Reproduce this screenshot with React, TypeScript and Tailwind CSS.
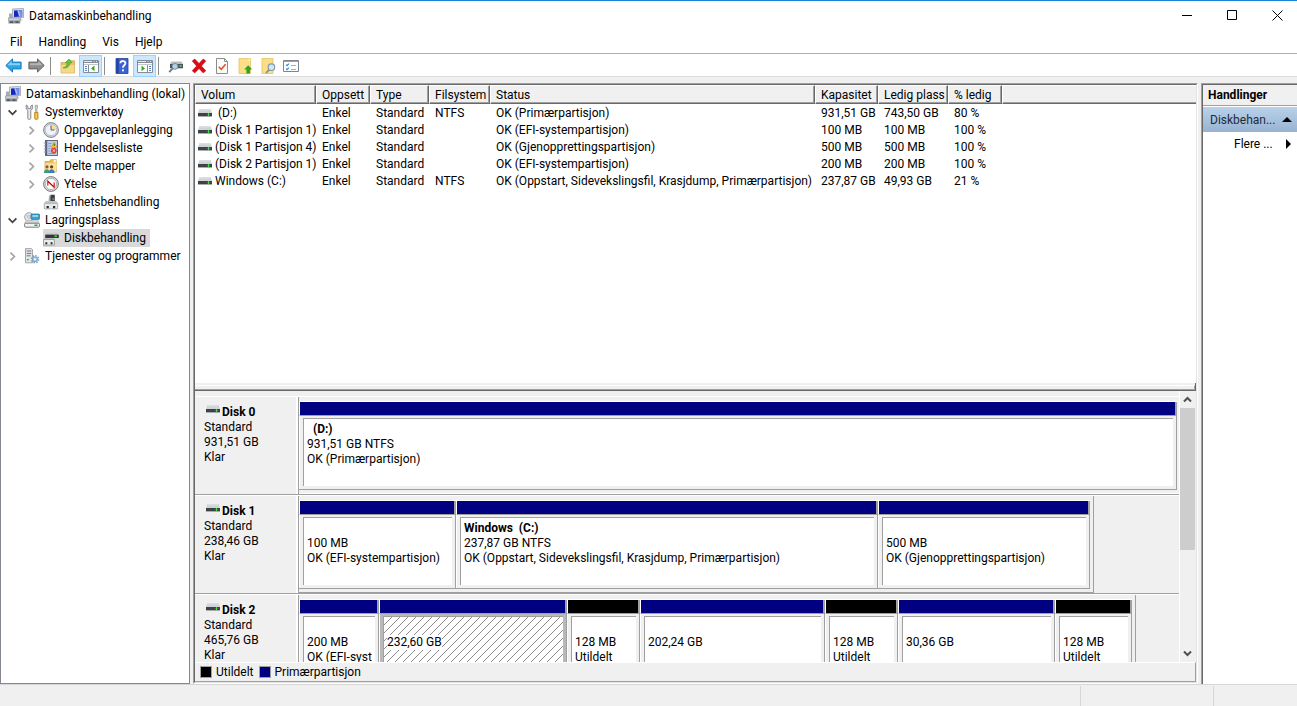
import { useState, ReactNode } from 'react';
import clsx from 'clsx';

type Volume = {
  name: string;
  fs: string;
  status: string;
  capacity: string;
  free: string;
  percent: string;
};

type Partition = {
  name?: string;
  size: string;
  status?: string;
  weight: number;
  unallocated?: boolean;
  selected?: boolean;
};

type Disk = {
  name: string;
  size: string;
  share: number;
  framed: boolean;
  partitions: Partition[];
};

const volumes: Volume[] = [
  { name: '\u00a0(D:)', fs: 'NTFS', status: 'OK (Primærpartisjon)', capacity: '931,51 GB', free: '743,50 GB', percent: '80 %' },
  { name: '(Disk 1 Partisjon 1)', fs: '', status: 'OK (EFI-systempartisjon)', capacity: '100 MB', free: '100 MB', percent: '100 %' },
  { name: '(Disk 1 Partisjon 4)', fs: '', status: 'OK (Gjenopprettingspartisjon)', capacity: '500 MB', free: '500 MB', percent: '100 %' },
  { name: '(Disk 2 Partisjon 1)', fs: '', status: 'OK (EFI-systempartisjon)', capacity: '200 MB', free: '200 MB', percent: '100 %' },
  { name: 'Windows (C:)', fs: 'NTFS', status: 'OK (Oppstart, Sidevekslingsfil, Krasjdump, Primærpartisjon)', capacity: '237,87 GB', free: '49,93 GB', percent: '21 %' },
];

const disks: Disk[] = [
  {
    name: 'Disk 0',
    size: '931,51 GB',
    share: 100,
    framed: false,
    partitions: [{ name: '\u00a0\u00a0(D:)', size: '931,51 GB NTFS', status: 'OK (Primærpartisjon)', weight: 878 }],
  },
  {
    name: 'Disk 1',
    size: '238,46 GB',
    share: 90.34,
    framed: true,
    partitions: [
      { size: '100 MB', status: 'OK (EFI-systempartisjon)', weight: 157 },
      { name: 'Windows\u00a0\u00a0(C:)', size: '237,87 GB NTFS', status: 'OK (Oppstart, Sidevekslingsfil, Krasjdump, Primærpartisjon)', weight: 422 },
      { size: '500 MB', status: 'OK (Gjenopprettingspartisjon)', weight: 212 },
    ],
  },
  {
    name: 'Disk 2',
    size: '465,76 GB',
    share: 95.11,
    framed: true,
    partitions: [
      { size: '200 MB', status: 'OK (EFI-systempartisjon)', weight: 80 },
      { size: '232,60 GB', weight: 188, selected: true },
      { size: '128 MB', status: 'Utildelt', weight: 73, unallocated: true },
      { size: '202,24 GB', weight: 185 },
      { size: '128 MB', status: 'Utildelt', weight: 73, unallocated: true },
      { size: '30,36 GB', weight: 157 },
      { size: '128 MB', status: 'Utildelt', weight: 77, unallocated: true },
    ],
  },
];

const columns = [
  { label: 'Volum', width: 'w-[121px]' },
  { label: 'Oppsett', width: 'w-[54px]' },
  { label: 'Type', width: 'w-[59px]' },
  { label: 'Filsystem', width: 'w-[61px]' },
  { label: 'Status', width: 'w-[325px]' },
  { label: 'Kapasitet', width: 'w-[63px]' },
  { label: 'Ledig plass', width: 'w-[70px]' },
  { label: '% ledig', width: 'w-[54px]' },
];

/* ---------- icons ---------- */

function Svg({ children, size = 16 }: { children: ReactNode; size?: number }) {
  return (
    <svg width={size} height={size} viewBox="0 0 16 16" className="shrink-0" aria-hidden="true">
      {children}
    </svg>
  );
}

function ComputerIcon() {
  return (
    <Svg>
      <path d="M4.5 1 15.5.5v9l-11 .7z" fill="#dcdfe3" stroke="#9a9fa6" strokeWidth=".8" />
      <path d="M6 2.4 14.2 2v6.4L6 9z" fill="#1428c0" />
      <path d="M10 2.2 14.2 2v6.4l-2.4.2z" fill="#6f8ff0" />
      <path d="m9.2 2.2 1.6 0 1.8 6.3-1.6.1z" fill="#c9d6ff" opacity=".8" />
      <path d="M9.5 10h3l2 2.6h-6z" fill="#c6cad0" />
      <path d="M1 5.5h3.2v4.8H1z" fill="#a7acb3" />
      <path d="M.5 9.8h11.8v3H.5z" fill="#c9cdd2" stroke="#868b92" strokeWidth=".6" />
      <path d="M.5 12.8h11.8v2.7H.5z" fill="#8b9097" />
      <path d="M2 13.5h3v1.2H2zM7.5 13.5h3v1.2h-3z" fill="#3f444a" />
    </Svg>
  );
}

function DriveIcon() {
  return (
    <svg width="14" height="8" viewBox="0 0 14 8" className="shrink-0" aria-hidden="true">
      <path d="M1.5 0h11L14 4H0z" fill="#cfd2d6" />
      <path d="M2 0h10l.6 1.6H1.4z" fill="#dcdfe2" />
      <rect y="4" width="14" height="3" fill="#3f4346" />
      <rect y="7" width="14" height="1" fill="#a9acaf" />
      <rect x="9" y="5" width="3" height="1" fill="#1f9a2c" />
      <rect x="10" y="4" width="1" height="3" fill="#3fdc4a" />
    </svg>
  );
}

function ToolsIcon() {
  return (
    <Svg>
      <path d="M2.2 1v3.8l1.6 1.6v8c0 1.4 3 1.4 3 0v-8l1.6-1.6V1L6.8 2v2.6H3.8V2z" fill="#e6e8ea" stroke="#7c8187" strokeWidth=".9" />
      <path d="M11.2 1.3h2.2v2.8l-.5 1v3.4h-1.2V5.1l-.5-1z" fill="#d8dade" stroke="#85898f" strokeWidth=".7" />
      <path d="M10.6 8.5H14v6c0 1.3-3.4 1.3-3.4 0z" fill="#f2b21c" stroke="#b57a08" strokeWidth=".7" />
      <path d="M12.3 9.5v5" stroke="#fbdc86" strokeWidth=".8" />
    </Svg>
  );
}

function ClockIcon() {
  return (
    <Svg>
      <circle cx="8" cy="8" r="7.4" fill="#d5d7da" stroke="#808388" strokeWidth="1" />
      <circle cx="8" cy="8" r="5.7" fill="#eef3f9" stroke="#a4a8ad" strokeWidth=".6" />
      <path d="M8 8V2.6A5.4 5.4 0 0 1 13.4 8z" fill="#f6d99c" />
      <path d="M8 3.4V8h3.4" fill="none" stroke="#5c6066" strokeWidth="1" />
    </Svg>
  );
}

function EventLogIcon() {
  return (
    <Svg>
      <rect x="2.5" y=".5" width="12" height="15" fill="#bdcfe9" stroke="#566079" strokeWidth=".9" />
      <rect x="2" y="1" width="2.2" height="14" fill="#5a6580" />
      <path d="M.8 3h2.4M.8 6h2.4M.8 9h2.4M.8 12h2.4" stroke="#8e96a8" strokeWidth="1" />
      <path d="M5.4 3.5h3M5.4 6h2.4M5.4 8.5h2M5.4 11h2M5.4 13.5h7" stroke="#7f94bb" strokeWidth=".9" />
      <path d="m11.2 2.2 2.8 5H8.4z" fill="#ffd93b" stroke="#b98c00" strokeWidth=".6" />
      <path d="M11.2 3.8v2.2" stroke="#333" strokeWidth=".9" />
      <circle cx="10.8" cy="10.6" r="2.9" fill="#d9453b" />
      <path d="m9.7 9.5 2.2 2.2m0-2.2-2.2 2.2" stroke="#fff" strokeWidth=".8" />
    </Svg>
  );
}

function SharedFolderIcon() {
  return (
    <Svg>
      <path d="M2 3.5h4.5l1-1.7h6V14H2z" fill="#e9bf5c" stroke="#c99a35" strokeWidth=".7" />
      <path d="M2.3 5.3H14l-.5 8.5H2.3z" fill="#fae09a" />
      <path d="M10.5 2h3v2.5h-3z" fill="#fff3cf" />
      <circle cx="4" cy="8.8" r="1.6" fill="#8b5a35" />
      <circle cx="8.6" cy="8.8" r="1.6" fill="#5b4031" />
      <path d="M.9 15c0-5 5.8-5 5.8 0z" fill="#3f9d7a" />
      <path d="M5.8 15c0-5 5.8-5 5.8 0z" fill="#3f78c4" />
    </Svg>
  );
}

function PerformanceIcon() {
  return (
    <Svg>
      <circle cx="8" cy="8" r="7.4" fill="#dcdee0" stroke="#77797d" strokeWidth="1" />
      <circle cx="8" cy="8" r="5.6" fill="#fff" stroke="#96999c" strokeWidth=".7" />
      <path d="M4.8 9.5V5.2l6.4 6V6.5" fill="none" stroke="#cf2a20" strokeWidth="1.3" />
      <path d="m5 5.2 6 5.8" stroke="#8d1610" strokeWidth="1" />
    </Svg>
  );
}

function DeviceIcon() {
  return (
    <Svg>
      <path d="M7.5.8h4.3V9H6z" fill="#3b3e42" />
      <path d="M6 2 7.5.8V8H5.5z" fill="#a7abb0" />
      <rect x="9.6" y="4.2" width="1.2" height="1.6" fill="#4be05b" />
      <path d="M2.5 7h11l1.3 2.4H1.2z" fill="#c4c7ca" />
      <path d="M1.3 9.3h13.4v5.6H1.3z" fill="#e6e8ea" stroke="#9da1a5" strokeWidth=".8" />
      <path d="M3.6 12h2.2v2.2H3.6zM10 12h2.2v2.2H10z" fill="#26292c" />
    </Svg>
  );
}

function StorageIcon() {
  return (
    <Svg>
      <circle cx="5" cy="5" r="4.4" fill="#e3e6e9" stroke="#8f9499" strokeWidth=".8" />
      <path d="M5 5 1.6 2.4M5 5l3.2-2.6" stroke="#bcc3ca" strokeWidth="1" />
      <circle cx="5" cy="5" r="1.3" fill="#fff" stroke="#8f9499" strokeWidth=".6" />
      <rect x="7" y="2" width="8.6" height="5.4" rx=".8" fill="#3b9fd0" stroke="#2a6f94" strokeWidth=".7" />
      <path d="M8.4 3.3h5.6v1.4H8.4z" fill="#bfe5f6" />
      <path d="M2 8.4h12l1.2 3H.8z" fill="#d6d9dc" stroke="#a3a7ab" strokeWidth=".5" />
      <rect x=".6" y="11.2" width="14.8" height="4" rx="1" fill="#f0f1f2" stroke="#6d7175" strokeWidth=".9" />
      <rect x="10.5" y="12.5" width="3" height="1.5" fill="#23a93a" />
    </Svg>
  );
}

function DiskMgmtIcon() {
  return (
    <Svg>
      <path d="M3.5 2.5h10.8l1.4 2.3H2.5z" fill="#cbced1" />
      <rect x="2.2" y="4.6" width="13.6" height="3.4" fill="#35383b" />
      <rect x="11.5" y="5.4" width="2.4" height="1.6" fill="#3be04b" />
      <path d="M1.5 8h9l.8 1.6H.7z" fill="#bfc2c5" />
      <path d="M.6 9.5h10.8v5.6H.6z" fill="#e9ebec" stroke="#8f9397" strokeWidth=".8" />
      <path d="M2.4 12.2h1.9v2H2.4zM7.6 12.2h1.9v2H7.6z" fill="#26292c" />
    </Svg>
  );
}

function ServicesIcon() {
  return (
    <Svg>
      <path d="M1.5.6h6l1 1v13.2h-7z" fill="#e4e7ea" stroke="#8f9499" strokeWidth=".8" />
      <path d="M2.6 3h4.8M2.6 5.4h4.8M2.6 7.8h4" stroke="#71777d" strokeWidth="1" />
      <rect x="2.8" y="11" width="2" height="1.4" fill="#34b34a" />
      <circle cx="11" cy="11.2" r="3.5" fill="none" stroke="#7ba3c6" strokeWidth="1.6" strokeDasharray="1.6 1.1" />
      <circle cx="11" cy="11.2" r="2.5" fill="#a9cbe6" stroke="#6b95bb" strokeWidth=".8" />
      <circle cx="11" cy="11.2" r="1" fill="#fff" />
    </Svg>
  );
}

function ArrowIcon({ forward = false }: { forward?: boolean }) {
  return (
    <svg width="17" height="15" viewBox="0 0 17 15" className={clsx('shrink-0', forward && '-scale-x-100')} aria-hidden="true">
      <path
        d="M.8 7.5 7.5.9v3.2h8.6v6.8H7.5v3.2z"
        fill={forward ? '#8d8d8d' : '#2fa5e6'}
        stroke={forward ? '#646464' : '#1c78bd'}
        strokeWidth="1"
        strokeLinejoin="round"
      />
      <path d="M2.4 7.2 6.6 3v2.2h8.4v2z" fill={forward ? '#b3b3b3' : '#83d2f8'} />
    </svg>
  );
}

function FolderUpIcon() {
  return (
    <Svg>
      <path d="M1 4.5h5l1.2-1.8h7.3V15H1z" fill="#e5c467" stroke="#c9a24a" strokeWidth=".7" />
      <path d="M1.3 7h13v7.7h-13z" fill="#f3d988" />
      <path d="M3 9.8C6.2 9 7.2 7.4 7.3 4.8H5.4L9 1l2.9 3.8h-2c-.2 3.4-3 6-6.9 5z" fill="#5cc83a" stroke="#3b9a26" strokeWidth=".6" />
    </Svg>
  );
}

function PaneIcon({ right = false }: { right?: boolean }) {
  return (
    <Svg>
      <path d="M.5 2.5h15v12H.5z" fill="#fff" stroke="#868c96" strokeWidth="1" />
      <path d="M1 3h14v2H1z" fill="#868c96" />
      <path d="M1 3.5h8M10.5 3.5h1M13 3.5h1" stroke="#e6e9ed" strokeWidth="1" />
      <path d="M1 6.5h14" stroke="#c3c8cf" strokeWidth="1" />
      <path d={right ? 'M10.5 7v7' : 'M5.5 7v7'} stroke="#868c96" strokeWidth="1" />
      <path d={right ? 'M12 8.5h2M12 10.5h2M12 12.5h2' : 'M2 8.5h2M2 10.5h2M2 12.5h2'} stroke="#4d7fc4" strokeWidth="1" />
      <path d={right ? 'M4.5 7.6v5.6L8 10.4z' : 'M11.5 7.6v5.6L8 10.4z'} fill="#3fa526" />
    </Svg>
  );
}

function HelpIcon() {
  return (
    <Svg>
      <path d="M2 .5h12v15H2z" fill="#3c63d2" stroke="#23409c" strokeWidth=".8" />
      <path d="M2.4.9h2.2v14.2H2.4z" fill="#21409f" />
      <path d="M6.4 5.2c0-3 5-2.8 5 0 0 2-2.5 2.2-2.5 4.6" fill="none" stroke="#fff" strokeWidth="1.8" />
      <rect x="8" y="11.4" width="1.9" height="1.9" fill="#fff" />
    </Svg>
  );
}

function DriveSearchIcon() {
  return (
    <Svg>
      <path d="M3.5 3.5h10L15 6H2z" fill="#b9bdc1" />
      <path d="M2 6h13v4H2z" fill="#4e5257" />
      <path d="M2 10h13v1H2z" fill="#c9cccf" />
      <rect x="11.5" y="7" width="2.2" height="1.8" fill="#42d552" />
      <circle cx="7" cy="8.4" r="2.9" fill="#b3d3ea" stroke="#7b8c9a" strokeWidth="1" />
      <path d="M4.8 10.4 1.2 14" stroke="#73797f" strokeWidth="1.8" />
    </Svg>
  );
}

function DeleteIcon() {
  return (
    <Svg>
      <path d="M1.2 3 3.8 1 8 5.4 12.2 1l2.6 2L10.4 8l4.4 4.8-2.6 2.1L8 10.6l-4.2 4.3-2.6-2.1L5.6 8z" fill="#dc0812" stroke="#b0050c" strokeWidth=".5" />
    </Svg>
  );
}

function CheckPageIcon() {
  return (
    <Svg>
      <path d="M2.5.5h8l3 3v12h-11z" fill="#fafafa" stroke="#8c8c8c" strokeWidth="1" />
      <path d="M10.5.5v3h3" fill="none" stroke="#8c8c8c" strokeWidth="1" />
      <path d="m4.8 8.8 2.4 2.5 4.4-5" fill="none" stroke="#e8501e" strokeWidth="1.6" />
    </Svg>
  );
}

function NoteUpIcon() {
  return (
    <Svg>
      <path d="M2 .5h11.5v15H2z" fill="#fadf88" stroke="#e6c360" strokeWidth=".8" />
      <path d="M10.5.8h2.6v3.4z" fill="#fdf0bd" />
      <path d="m11.2 7.2 4 4.2H13v4H9.4v-4H7.2z" fill="#2ea51f" />
    </Svg>
  );
}

function NoteSearchIcon() {
  return (
    <Svg>
      <path d="M2 .5h11v15H2z" fill="#fadf88" stroke="#e6c360" strokeWidth=".8" />
      <circle cx="11.4" cy="9.2" r="3.3" fill="#cfe6f5" stroke="#7c97ab" strokeWidth="1.1" />
      <path d="m9 11.8-3 3.2" stroke="#8b8f94" strokeWidth="1.8" />
    </Svg>
  );
}

function ChecklistIcon() {
  return (
    <Svg>
      <path d="M.5 2.5h15v11H.5z" fill="#fff" stroke="#80858d" strokeWidth="1" />
      <path d="M1 3.5h14" stroke="#9aa0a9" strokeWidth="1" />
      <path d="m3 6.6 1.1 1.1 1.8-2M3 10.6l1.1 1.1 1.8-2" fill="none" stroke="#2f86d6" strokeWidth="1.1" />
      <path d="M8 7.5h5M8 11.5h5" stroke="#a5abb3" strokeWidth="1" />
    </Svg>
  );
}

function Chevron({ open }: { open: boolean }) {
  return (
    <svg width="9" height="9" viewBox="0 0 9 9" aria-hidden="true">
      <path d={open ? 'M.6 2.4 4.5 6.3 8.4 2.4' : 'M2.5.6 6.4 4.5 2.5 8.4'} fill="none" stroke={open ? '#404040' : '#a6a6a6'} strokeWidth="1.7" />
    </svg>
  );
}

/* ---------- window chrome ---------- */

function TitleBar() {
  return (
    <header className="flex h-[30px] items-center pl-2">
      <ComputerIcon />
      <h1 className="ml-[5px] flex-1">Datamaskinbehandling</h1>
      <div className="flex gap-1.5 self-start">
        <button type="button" aria-label="Minimer" className="flex h-7 w-[39px] items-center justify-center">
          <svg width="11" height="11"><path d="M0 5.5h10" stroke="#000" /></svg>
        </button>
        <button type="button" aria-label="Maksimer" className="flex h-7 w-[39px] items-center justify-center">
          <svg width="11" height="11"><path d="M.5.5h9v9h-9z" fill="none" stroke="#000" /></svg>
        </button>
        <button type="button" aria-label="Lukk" className="flex h-7 w-[39px] items-center justify-center">
          <svg width="11" height="11"><path d="m.5.5 10 10m0-10-10 10" stroke="#000" /></svg>
        </button>
      </div>
    </header>
  );
}

function ToolButton({ label, active = false, children }: { label: string; active?: boolean; children: ReactNode }) {
  return (
    <button
      type="button"
      aria-label={label}
      className={clsx(
        'flex h-[22px] w-[23px] items-center justify-center border',
        active ? 'border-[#99d1ff] bg-[#cce8ff]' : 'border-transparent',
      )}
    >
      {children}
    </button>
  );
}

function Separator() {
  return (
    <div className="w-2 pl-0.5">
      <div className="h-[18px] w-px bg-[#8c8c8c]" />
    </div>
  );
}

function Toolbar() {
  return (
    <div className="flex h-[23px] items-center border-b border-[#dcdcdc] pt-px pl-0.5">
      <ToolButton label="Tilbake"><ArrowIcon /></ToolButton>
      <ToolButton label="Frem"><ArrowIcon forward /></ToolButton>
      <Separator />
      <ToolButton label="Opp ett nivå"><FolderUpIcon /></ToolButton>
      <ToolButton label="Vis konsolltre" active><PaneIcon /></ToolButton>
      <Separator />
      <ToolButton label="Hjelp"><HelpIcon /></ToolButton>
      <ToolButton label="Vis handlingsrute" active><PaneIcon right /></ToolButton>
      <Separator />
      <ToolButton label="Søk på nytt"><DriveSearchIcon /></ToolButton>
      <ToolButton label="Slett"><DeleteIcon /></ToolButton>
      <ToolButton label="Egenskaper"><CheckPageIcon /></ToolButton>
      <ToolButton label="Åpne"><NoteUpIcon /></ToolButton>
      <ToolButton label="Utforsk"><NoteSearchIcon /></ToolButton>
      <ToolButton label="Innstillinger"><ChecklistIcon /></ToolButton>
    </div>
  );
}

/* ---------- tree ---------- */

type NodeProps = {
  icon: ReactNode;
  label: string;
  level: 1 | 2;
  state?: 'open' | 'closed';
  selected?: boolean;
  onClick?: () => void;
};

function TreeNode({ icon, label, level, state, selected = false, onClick }: NodeProps) {
  return (
    <button type="button" onClick={onClick} className={clsx('flex h-[18px] items-center', level === 1 ? 'pl-[7px]' : 'pl-[26px]')}>
      <span className="flex w-4">{state && <Chevron open={state === 'open'} />}</span>
      <span className={clsx('flex h-[18px] items-center gap-[5px] pr-1', selected && 'bg-[#d9d9d9]')}>
        {icon}
        {label}
      </span>
    </button>
  );
}

function Tree() {
  const [tools, setTools] = useState(true);
  const [storage, setStorage] = useState(true);

  return (
    <nav className="w-[190px] shrink-0 overflow-hidden border border-[#828790] bg-white pt-px whitespace-nowrap">
      <button type="button" className="flex h-[18px] items-center gap-[5px] pl-1">
        <ComputerIcon />
        Datamaskinbehandling (lokal)
      </button>
      <TreeNode level={1} icon={<ToolsIcon />} label="Systemverktøy" state={tools ? 'open' : 'closed'} onClick={() => setTools(!tools)} />
      {tools && (
        <div>
          <TreeNode level={2} icon={<ClockIcon />} label="Oppgaveplanlegging" state="closed" />
          <TreeNode level={2} icon={<EventLogIcon />} label="Hendelsesliste" state="closed" />
          <TreeNode level={2} icon={<SharedFolderIcon />} label="Delte mapper" state="closed" />
          <TreeNode level={2} icon={<PerformanceIcon />} label="Ytelse" state="closed" />
          <TreeNode level={2} icon={<DeviceIcon />} label="Enhetsbehandling" />
        </div>
      )}
      <TreeNode level={1} icon={<StorageIcon />} label="Lagringsplass" state={storage ? 'open' : 'closed'} onClick={() => setStorage(!storage)} />
      {storage && <TreeNode level={2} icon={<DiskMgmtIcon />} label="Diskbehandling" selected />}
      <TreeNode level={1} icon={<ServicesIcon />} label="Tjenester og programmer" state="closed" />
    </nav>
  );
}

/* ---------- volume list ---------- */

function VolumeTable() {
  return (
    <div className="min-h-0 flex-1 overflow-hidden bg-white">
      <table className="w-full table-fixed border-separate border-spacing-0 text-left whitespace-nowrap">
        <thead>
          <tr className="h-[19px] bg-[#f0f0f0]">
            {columns.map((col) => (
              <th
                key={col.label}
                scope="col"
                className={clsx(
                  col.width,
                  'border-t border-r border-b border-l border-t-white border-r-[#696969] border-b-[#696969] border-l-white p-0 pl-[5px] leading-4 font-normal shadow-[inset_-1px_-1px_0_#a0a0a0]',
                )}
              >
                {col.label}
              </th>
            ))}
            <td className="border-t border-b border-l border-t-white border-b-[#696969] border-l-white p-0 shadow-[inset_0_-1px_0_#a0a0a0]" />
          </tr>
        </thead>
        <tbody>
          {volumes.map((v) => (
            <tr key={v.name} className="h-[17px] leading-4">
              <td className="p-0 pl-[3px]">
                <span className="flex items-center gap-[3px]">
                  <DriveIcon />
                  {v.name}
                </span>
              </td>
              <td className="p-0 pl-1.5">Enkel</td>
              <td className="p-0 pl-1.5">Standard</td>
              <td className="p-0 pl-1.5">{v.fs}</td>
              <td className="p-0 pl-1.5">{v.status}</td>
              <td className="p-0 pl-1.5">{v.capacity}</td>
              <td className="p-0 pl-1.5">{v.free}</td>
              <td className="p-0 pl-1.5">{v.percent}</td>
              <td className="p-0" />
            </tr>
          ))}
        </tbody>
      </table>
    </div>
  );
}

/* ---------- disk map ---------- */

function Hatch() {
  return (
    <svg className="absolute inset-0 size-full" aria-hidden="true">
      <defs>
        <pattern id="hatch" width="8" height="8" patternUnits="userSpaceOnUse">
          <path d="M-1 9 9-1" stroke="#8c8c8c" strokeWidth="1" shapeRendering="crispEdges" />
        </pattern>
      </defs>
      <rect width="100%" height="100%" fill="url(#hatch)" />
    </svg>
  );
}

function PartitionBox({ part }: { part: Partition }) {
  return (
    <div className="flex min-w-0 basis-0 flex-col border-t border-b border-t-white border-b-[#a0a0a0]" style={{ flexGrow: part.weight }}>
      <div
        className={clsx(
          'h-[14px] border-r-2 border-b border-l border-r-[#a0a0a0] border-b-[#a0a0a0] border-l-white',
          part.unallocated ? 'bg-black' : 'bg-[#000080]',
        )}
      />
      <div className={clsx('flex flex-1 border-r border-l border-r-[#a0a0a0] border-l-white px-[3px] pt-0.5 pb-[3px]', part.selected && 'bg-[#b9b9b9]')}>
        <div className="relative min-w-0 flex-1 overflow-hidden border-t border-l border-[#a0a0a0] bg-white px-[3px] pt-[3px] leading-[15px] whitespace-nowrap">
          {part.selected && <Hatch />}
          <p className="h-[15px] font-bold">{part.name}</p>
          <p className="relative w-fit bg-white">{part.size}</p>
          <p className="overflow-hidden">{part.status}</p>
        </div>
      </div>
    </div>
  );
}

function DiskRow({ disk }: { disk: Disk }) {
  return (
    <div className="flex h-[99px] border-t border-b border-t-white border-b-[#a0a0a0]">
      <div className="flex w-[104px] shrink-0 border-r border-[#a0a0a0]">
        <div className="flex-1 border-r-2 border-white pt-2 pl-[9px] leading-[15px]">
          <h2 className="flex items-start gap-0.5 pl-0.5 font-bold">
            <DriveIcon />
            {disk.name}
          </h2>
          <p>Standard</p>
          <p>{disk.size}</p>
          <p>Klar</p>
        </div>
      </div>
      <div className="min-w-0 flex-1">
        <div
          className={clsx('flex h-full border-b pt-1 pb-[3px]', disk.framed ? 'border-r border-[#a0a0a0] pr-[3px]' : 'border-white pr-0.5')}
          style={{ width: `${disk.share}%` }}
        >
          {disk.partitions.map((part, i) => (
            <PartitionBox key={i} part={part} />
          ))}
        </div>
      </div>
    </div>
  );
}

function DiskMap() {
  return (
    <div className="flex h-[271px] shrink-0 overflow-hidden">
      <div className="min-w-0 flex-1 overflow-hidden pt-[5px]">
        {disks.map((disk) => (
          <DiskRow key={disk.name} disk={disk} />
        ))}
      </div>
      <div className="flex w-[17px] shrink-0 flex-col items-center border-l border-white pr-px">
        <button type="button" aria-label="Rull opp" className="flex h-[17px] items-center">
          <svg width="9" height="9"><path d="M1 6.5 4.5 3 8 6.5" fill="none" stroke="#505050" strokeWidth="2" /></svg>
        </button>
        <div className="h-[142px] w-full bg-[#cdcdcd]" />
        <div className="flex-1" />
        <button type="button" aria-label="Rull ned" className="flex h-[17px] items-center">
          <svg width="9" height="9"><path d="M1 2.5 4.5 6 8 2.5" fill="none" stroke="#505050" strokeWidth="2" /></svg>
        </button>
      </div>
    </div>
  );
}

function Legend() {
  return (
    <div className="flex h-5 shrink-0 items-center border-t border-r border-b border-t-white border-r-[#a0a0a0] border-b-[#a0a0a0] pl-[5px]">
      <span className="mr-1 size-3 border border-[#a0a0a0] bg-black" />
      Utildelt
      <span className="mr-1 ml-[5px] size-3 border border-[#a0a0a0] bg-[#000080]" />
      Primærpartisjon
    </div>
  );
}

/* ---------- actions pane ---------- */

function Actions() {
  return (
    <aside className="w-24 shrink-0 border-t border-l border-[#a0a0a0]">
      <div className="h-full border-t border-l border-[#696969] bg-white">
        <h2 className="h-[21px] border-b border-[#a0a0a0] bg-[#f0f0f0] pt-0.5 pl-[5px] font-bold">Handlinger</h2>
        <button type="button" className="mt-px flex h-[25px] w-full items-center justify-between bg-linear-to-b from-[#b9d1ea] to-[#98b3d2] pr-[5px] pl-[7px]">
          <span className="text-[#1e2b3b]">Diskbehan...</span>
          <svg width="10" height="5"><path d="M0 5 5 0l5 5z" /></svg>
        </button>
        <button type="button" className="flex h-6 w-full items-center justify-between pr-1.5 pl-[31px]">
          Flere ...
          <svg width="5" height="10"><path d="m0 0 5 5-5 5z" /></svg>
        </button>
      </div>
    </aside>
  );
}

export default function App() {
  return (
    <div className="flex h-screen flex-col overflow-hidden border-t border-[#1883d7] bg-white font-['Roboto',sans-serif] text-[12px] leading-4 text-black">
      <TitleBar />
      <div className="flex h-[23px] items-center border-b border-[#a9adbd] pl-2.5">
        <button type="button" className="mr-4">Fil</button>
        <button type="button" className="mr-4">Handling</button>
        <button type="button" className="mr-4">Vis</button>
        <button type="button">Hjelp</button>
      </div>
      <Toolbar />
      <div className="flex min-h-0 flex-1 gap-[3px] bg-[#f0f0f0] pt-1.5">
        <Tree />
        <main className="flex min-w-0 flex-1 border-t border-r border-b border-l border-t-[#a0a0a0] border-r-white border-b-white border-l-[#a0a0a0]">
          <div className="flex min-w-0 flex-1 flex-col border border-t-[#696969] border-r-[#e3e3e3] border-b-[#e3e3e3] border-l-[#696969]">
            <VolumeTable />
            <div className="h-2 shrink-0 border-r border-b border-[#696969] pt-0.5">
              <div className="h-[5px] border-t border-r border-b border-t-white border-r-[#a0a0a0] border-b-[#a0a0a0]" />
            </div>
            <DiskMap />
            <Legend />
          </div>
        </main>
        <Actions />
      </div>
      <footer className="flex h-[22px] shrink-0 justify-end border-t border-[#d7d7d7] bg-[#f0f0f0] pt-px">
        <div className="w-[133px] border-l border-[#d7d7d7]" />
        <div className="w-21 border-l border-[#d7d7d7]" />
      </footer>
    </div>
  );
}
